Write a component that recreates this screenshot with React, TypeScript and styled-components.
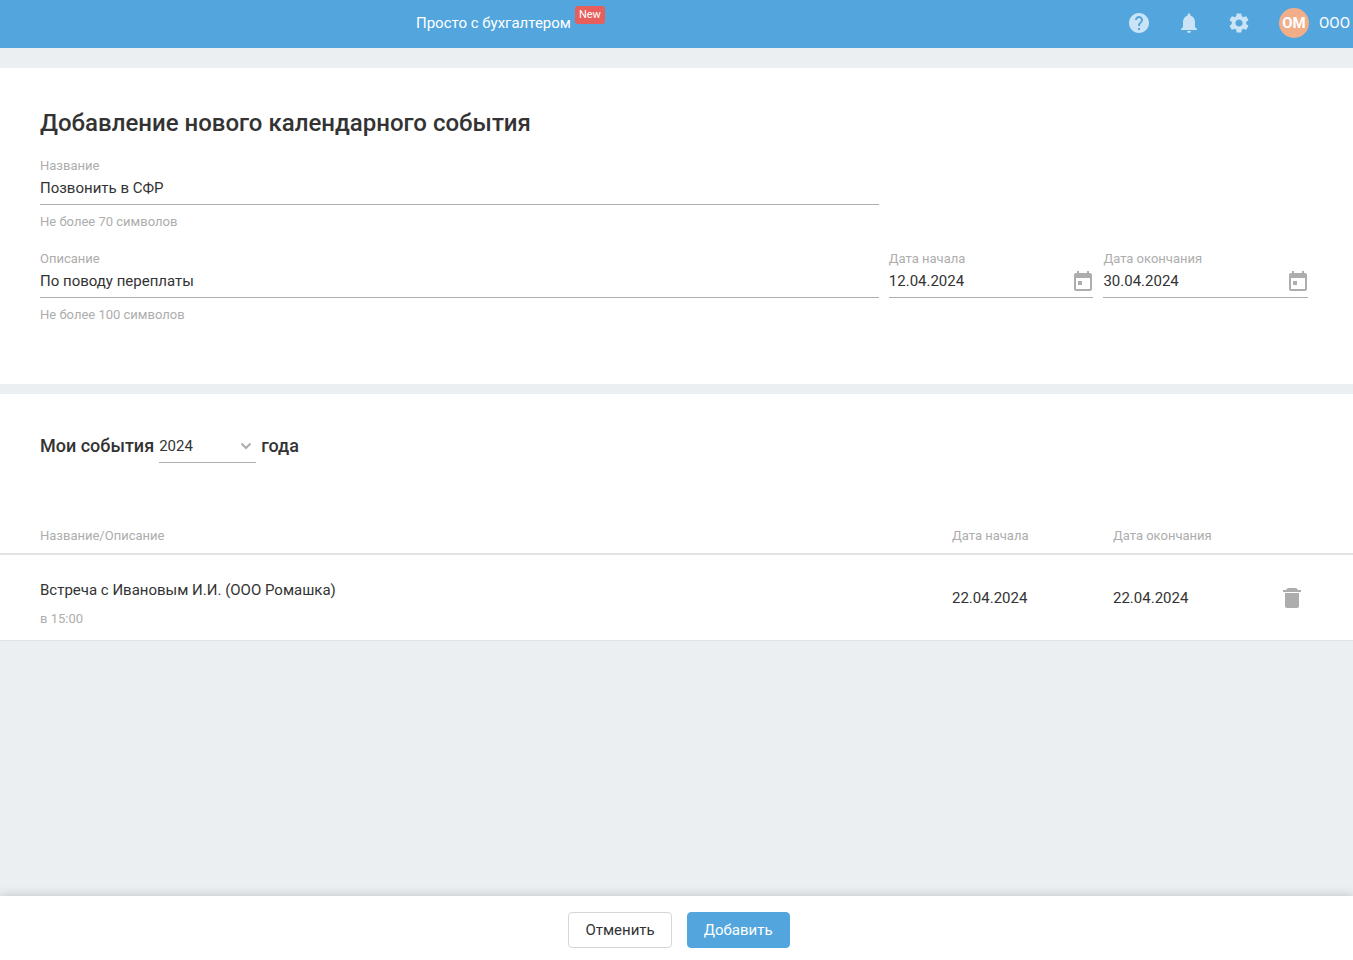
import React, { useState } from 'react';
import styled, { createGlobalStyle } from 'styled-components';
import { MdHelp, MdNotifications, MdSettings } from 'react-icons/md';

const GlobalStyle = createGlobalStyle`
  * { box-sizing: border-box; }
  body {
    margin: 0;
    background: #ebeff2;
    color: #333;
    font: 15px/20px Roboto, Arial, sans-serif;
  }
  button, input, select { font: inherit; color: inherit; }
`;

const Page = styled.div`
  min-height: 100vh;
  display: flex;
  flex-direction: column;
`;

const Header = styled.header`
  display: flex;
  align-items: center;
  height: 48px;
  padding: 0 3px 2px 416px;
  background: #53a6dd;
  color: #fff;
`;

const NavLink = styled.a`
  display: flex;
  gap: 4px;
  color: inherit;
  text-decoration: none;
  white-space: nowrap;
`;

const Badge = styled.span`
  align-self: flex-start;
  margin-top: -7px;
  padding: 0 4px;
  border-radius: 3px;
  background: #e65f5c;
  font-size: 11px;
  line-height: 18px;
`;

const Tools = styled.div`
  display: flex;
  align-items: center;
  gap: 26px;
  margin-left: auto;
`;

const IconButton = styled.button`
  display: flex;
  padding: 0;
  border: 0;
  background: none;
  color: inherit;
  cursor: pointer;
  svg { display: block; }
`;

const ToolButton = styled(IconButton)`
  color: rgba(255, 255, 255, 0.7);
`;

const CalendarButton = styled(IconButton)`
  padding-bottom: 4px;
`;

const Account = styled.a`
  display: flex;
  align-items: center;
  gap: 10px;
  margin-left: 2px;
  color: inherit;
  text-decoration: none;
`;

const Avatar = styled.span`
  width: 30px;
  height: 30px;
  border-radius: 50%;
  background: #f2ad89;
  line-height: 30px;
  font-weight: 700;
  text-align: center;
`;

const Main = styled.main`
  display: flex;
  flex: 1;
  flex-direction: column;
  gap: 10px;
  padding: 20px 0 84px;
`;

const Panel = styled.section`
  background: #fff;
`;

const EventForm = styled.form`
  padding: 39px 45px 59px 40px;
`;

const Title = styled.h1`
  margin: 0 0 17px;
  font-size: 24px;
  line-height: 32px;
  font-weight: 500;
`;

const FieldGrid = styled.div`
  display: grid;
  grid-template-columns: minmax(0, 4.1fr) minmax(0, 1fr) minmax(0, 1fr);
  gap: 17px 10px;
`;

const Field = styled.div<{ $newRow?: boolean }>`
  display: flex;
  flex-direction: column;
  grid-column: ${({ $newRow }) => ($newRow ? '1' : 'auto')};
`;

const Label = styled.label`
  color: #adadad;
  font-size: 13px;
  line-height: 20px;
`;

const Control = styled.div`
  display: flex;
  align-items: center;
  height: 29px;
  border-bottom: 1px solid #adadad;
  color: #adadad;
`;

const Input = styled.input`
  flex: 1;
  min-width: 0;
  height: 28px;
  padding: 0 0 4px;
  border: 0;
  outline: 0;
  background: none;
  color: #333;
`;

const Hint = styled.span`
  margin-top: 7px;
  color: #adadad;
  font-size: 13px;
  line-height: 20px;
`;

const ListHeading = styled.h2`
  display: flex;
  align-items: center;
  gap: 5px;
  margin: 0;
  padding: 34px 40px 0;
  font-size: 18px;
  line-height: 34px;
  font-weight: 500;
`;

const YearPicker = styled.span`
  display: grid;
  align-items: center;
  width: 97px;
  border-bottom: 1px solid #adadad;
  color: #adadad;
  > * { grid-area: 1 / 1; }
  svg { justify-self: end; margin: 2px 4px 0 0; pointer-events: none; }
`;

const Select = styled.select`
  appearance: none;
  width: 100%;
  height: 34px;
  padding: 1px 0 0;
  border: 0;
  outline: 0;
  background: none;
  color: #333;
  font-size: 15px;
  font-weight: 400;
`;

const Table = styled.table`
  width: 100%;
  margin-top: 56px;
  border-collapse: separate;
  border-spacing: 0;
  table-layout: fixed;
  text-align: left;
`;

const HeadCell = styled.th<{ $width?: string }>`
  width: ${({ $width }) => $width ?? 'auto'};
  height: 36px;
  padding: 0;
  border-bottom: 2px solid #e1e3e4;
  color: #adadad;
  font-size: 13px;
  font-weight: 400;
  &:first-child { padding-left: 40px; }
`;

const Cell = styled.td`
  height: 86px;
  padding: 0;
  border-bottom: 1px solid #e1e3e4;
  &:first-child { padding: 13px 0 0 40px; }
`;

const EventNote = styled.div`
  margin-top: 9px;
  color: #adadad;
  font-size: 13px;
`;

const DeleteButton = styled(IconButton)`
  color: #adadad;
`;

const Footer = styled.footer`
  position: sticky;
  bottom: 0;
  display: flex;
  justify-content: center;
  gap: 15px;
  padding: 16px 0 12px 5px;
  background: #fff;
  box-shadow: 0 0 10px rgba(0, 0, 0, 0.2);
`;

const Button = styled.button<{ $primary?: boolean }>`
  height: 36px;
  padding: 0 16px;
  border: 1px solid ${({ $primary }) => ($primary ? '#53a6dd' : '#d6d6d6')};
  border-radius: 4px;
  background: ${({ $primary }) => ($primary ? '#53a6dd' : '#fff')};
  color: ${({ $primary }) => ($primary ? '#fff' : '#333')};
  cursor: pointer;
`;

const CalendarIcon = () => (
  <svg width="20" height="20" viewBox="2 1 20 20" fill="currentColor" aria-hidden="true">
    <path d="M19 3h-1V1h-2v2H8V1H6v2H5c-1.1 0-2 .9-2 2v14c0 1.1.9 2 2 2h14c1.1 0 2-.9 2-2V5c0-1.1-.9-2-2-2zm0 16H5V8h14v11zM7 11h4v4H7z" />
  </svg>
);

const TrashIcon = () => (
  <svg width="18" height="20" viewBox="0 0 18 20" fill="currentColor" aria-hidden="true">
    <path d="M0 2h3C3.700.9 4.500 0 6 0h6c1.500 0 2.300.9 3 2h3v2H0zM2 5h14v13c0 1.200-.8 2-2 2H4c-1.200 0-2-.8-2-2z" />
  </svg>
);

const ChevronIcon = () => (
  <svg width="12" height="8" viewBox="0 0 12 8" fill="none" stroke="currentColor" strokeWidth="2" aria-hidden="true">
    <path d="M1.500 1.500 6 6l4.500-4.500" />
  </svg>
);

const events = [
  { title: 'Встреча с Ивановым И.И. (ООО Ромашка)', note: 'в 15:00', start: '22.04.2024', end: '22.04.2024' },
];

export default function App() {
  const [form, setForm] = useState({
    name: 'Позвонить в СФР',
    description: 'По поводу переплаты',
    start: '12.04.2024',
    end: '30.04.2024',
  });
  const bind = (key: keyof typeof form) => ({
    id: key,
    value: form[key],
    onChange: (e: React.ChangeEvent<HTMLInputElement>) => setForm({ ...form, [key]: e.target.value }),
  });

  return (
    <Page>
      <GlobalStyle />
      <Header>
        <NavLink href="#accountant">
          Просто с бухгалтером <Badge>New</Badge>
        </NavLink>
        <Tools>
          <ToolButton aria-label="Помощь"><MdHelp size={24} /></ToolButton>
          <ToolButton aria-label="Уведомления"><MdNotifications size={24} /></ToolButton>
          <ToolButton aria-label="Настройки"><MdSettings size={24} /></ToolButton>
          <Account href="#account">
            <Avatar>ОМ</Avatar>
            ООО
          </Account>
        </Tools>
      </Header>

      <Main>
        <Panel>
          <EventForm id="event-form" onSubmit={(e) => e.preventDefault()}>
            <Title>Добавление нового календарного события</Title>
            <FieldGrid>
              <Field>
                <Label htmlFor="name">Название</Label>
                <Control><Input maxLength={70} {...bind('name')} /></Control>
                <Hint>Не более 70 символов</Hint>
              </Field>
              <Field $newRow>
                <Label htmlFor="description">Описание</Label>
                <Control><Input maxLength={100} {...bind('description')} /></Control>
                <Hint>Не более 100 символов</Hint>
              </Field>
              <Field>
                <Label htmlFor="start">Дата начала</Label>
                <Control>
                  <Input {...bind('start')} />
                  <CalendarButton type="button" aria-label="Выбрать дату начала"><CalendarIcon /></CalendarButton>
                </Control>
              </Field>
              <Field>
                <Label htmlFor="end">Дата окончания</Label>
                <Control>
                  <Input {...bind('end')} />
                  <CalendarButton type="button" aria-label="Выбрать дату окончания"><CalendarIcon /></CalendarButton>
                </Control>
              </Field>
            </FieldGrid>
          </EventForm>
        </Panel>

        <Panel>
          <ListHeading>
            <label htmlFor="year">Мои события</label>
            <YearPicker>
              <Select id="year" defaultValue="2024">
                <option>2023</option>
                <option>2024</option>
                <option>2025</option>
              </Select>
              <ChevronIcon />
            </YearPicker>
            года
          </ListHeading>
          <Table>
            <thead>
              <tr>
                <HeadCell>Название/Описание</HeadCell>
                <HeadCell $width="161px">Дата начала</HeadCell>
                <HeadCell $width="170px">Дата окончания</HeadCell>
                <HeadCell $width="70px" aria-label="Действия" />
              </tr>
            </thead>
            <tbody>
              {events.map((event) => (
                <tr key={event.title}>
                  <Cell>
                    {event.title}
                    <EventNote>{event.note}</EventNote>
                  </Cell>
                  <Cell>{event.start}</Cell>
                  <Cell>{event.end}</Cell>
                  <Cell>
                    <DeleteButton type="button" aria-label="Удалить событие"><TrashIcon /></DeleteButton>
                  </Cell>
                </tr>
              ))}
            </tbody>
          </Table>
        </Panel>
      </Main>

      <Footer>
        <Button type="button">Отменить</Button>
        <Button type="submit" form="event-form" $primary>Добавить</Button>
      </Footer>
    </Page>
  );
}
